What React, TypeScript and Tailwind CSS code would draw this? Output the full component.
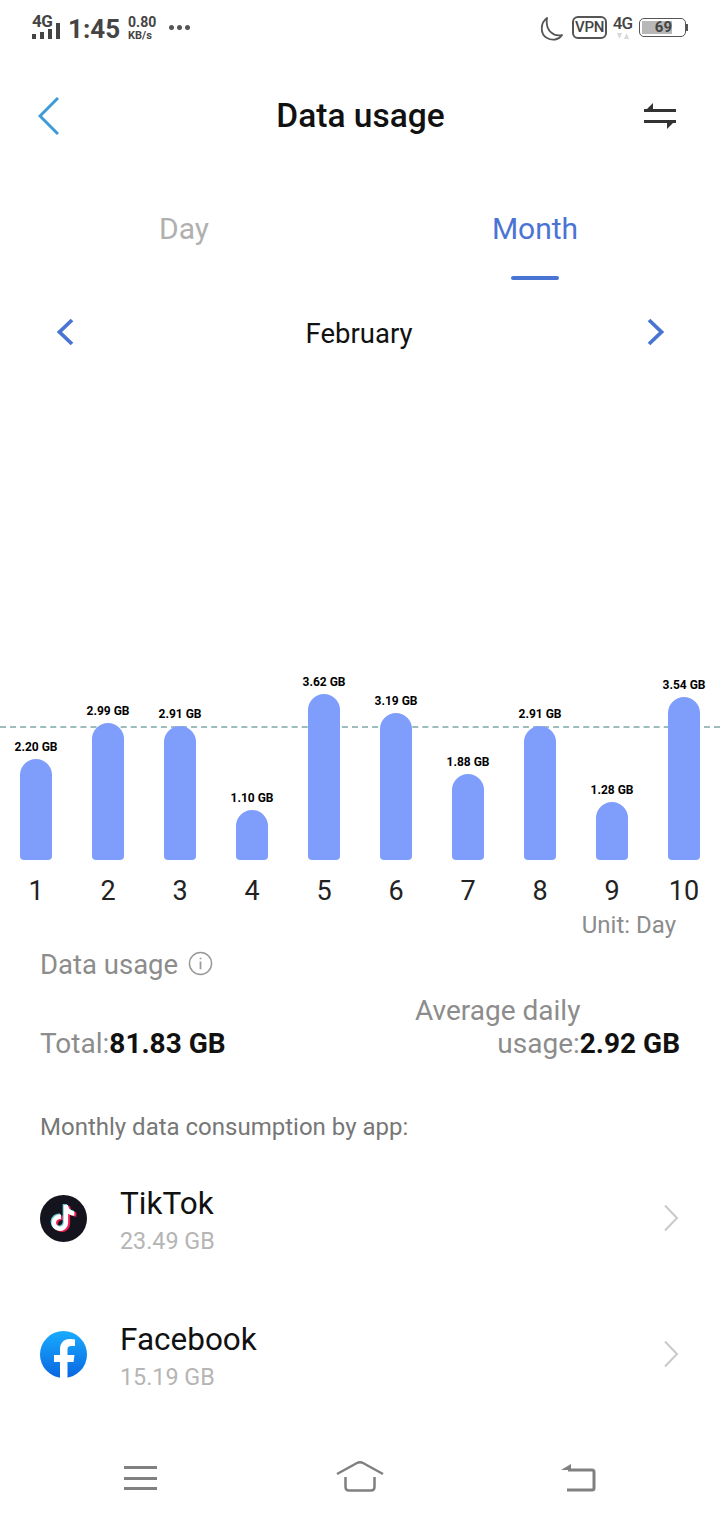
import { FaTiktok } from 'react-icons/fa';

const bars = [
  { day: 1, label: '2.20 GB', height: 101 },
  { day: 2, label: '2.99 GB', height: 137 },
  { day: 3, label: '2.91 GB', height: 134 },
  { day: 4, label: '1.10 GB', height: 50 },
  { day: 5, label: '3.62 GB', height: 166 },
  { day: 6, label: '3.19 GB', height: 147 },
  { day: 7, label: '1.88 GB', height: 86 },
  { day: 8, label: '2.91 GB', height: 134 },
  { day: 9, label: '1.28 GB', height: 58 },
  { day: 10, label: '3.54 GB', height: 163 },
];

function StatusBar() {
  return (
    <div className="h-[56px] flex items-start justify-between pl-[32px] pr-[32px] pt-[12px] text-[#444444]">
      <div className="flex items-start">
        <div className="relative w-[28px] h-[28px]">
          <span className="absolute left-0 top-[1px] text-[17px] leading-[17px] font-bold tracking-[-0.5px]">4G</span>
          <div className="absolute left-0 top-[11px] h-[16px] flex items-end gap-[4px]">
            <div className="w-[4px] h-[5px] bg-[#444444]" />
            <div className="w-[4px] h-[7px] bg-[#444444]" />
            <div className="w-[4px] h-[10px] bg-[#444444]" />
            <div className="w-[4px] h-[16px] bg-[#444444]" />
          </div>
        </div>
        <span className="ml-[8px] mt-[1px] text-[26px] leading-[32px] font-bold">1:45</span>
        <div className="ml-[8px] flex flex-col items-start text-[#444444] font-bold mt-[3px]">
          <span className="text-[14px] leading-[14px]">0.80</span>
          <span className="text-[11px] leading-[13px]">KB/s</span>
        </div>
        <div className="ml-[13px] mt-[13px] flex gap-[3px]">
          <div className="w-[5px] h-[5px] rounded-full bg-[#555555]" />
          <div className="w-[5px] h-[5px] rounded-full bg-[#555555]" />
          <div className="w-[5px] h-[5px] rounded-full bg-[#555555]" />
        </div>
      </div>
      <div className="flex items-start">
        <svg width="24" height="26" viewBox="0 0 24 26" fill="none" className="mt-[4px]">
          <path d="M8 2 C1 7 1 18 8 22 C13 25 20 24 23 19 C15 21 6 15 8 2 Z" stroke="#555555" strokeWidth="1.8" strokeLinejoin="round" />
        </svg>
        <div className="ml-[9px] mt-[4px] w-[35px] h-[23px] rounded-[6px] border-2 border-[#555555] flex items-center justify-center text-[15px] font-medium tracking-[-0.3px]">VPN</div>
        <div className="ml-[6px] w-[19px] flex flex-col items-center">
          <span className="text-[17px] leading-[17px] font-medium tracking-[-0.8px] mt-[3px]">4G</span>
          <svg width="14" height="7" viewBox="0 0 14 7" className="mt-[1px]">
            <path d="M1 0 L6 0 L3.5 6 Z M8 6 L13 6 L10.500 0 Z" fill="#d8d8d8" />
          </svg>
        </div>
        <div className="ml-[7px] mt-[6px] flex items-center">
          <div className="w-[47px] h-[19px] rounded-[5px] border border-[#555555] p-[2px]">
            <div className="w-[30px] h-full bg-[#b8b8b8] flex items-center justify-end text-[15px] font-bold">
              <span>69</span>
            </div>
          </div>
          <div className="w-[2px] h-[7px] bg-[#555555]" />
        </div>
      </div>
    </div>
  );
}

function Chart() {
  return (
    <div className="relative">
      <div className="absolute left-0 right-0 top-[58px] border-t-2 border-dashed border-[#9dbdbd]" />
      <div className="h-[192px] grid grid-cols-10 items-end">
        {bars.map((b) => (
          <div key={b.day} className="flex flex-col items-center">
            <span className="text-[12px] leading-[13px] font-bold text-black mb-[5px] whitespace-nowrap">{b.label}</span>
            <div
              className="relative w-[32px] rounded-t-[16px] rounded-b-[4px] bg-[#7f9efb]"
              style={{ height: b.height }}
            />
          </div>
        ))}
      </div>
      <div className="grid grid-cols-10 mt-[15px]">
        {bars.map((b) => (
          <span key={b.day} className="text-center text-[27px] leading-[32px] text-[#222222]">{b.day}</span>
        ))}
      </div>
    </div>
  );
}

function AppRow({ icon, name, size }: { icon: React.ReactNode; name: string; size: string }) {
  return (
    <div className="h-[136px] pl-[40px] pr-[41px] flex items-center">
      <div className="w-[47px] h-[47px] shrink-0">{icon}</div>
      <div className="ml-[33px] flex-1 pt-[4px]">
        <div className="text-[31.500px] leading-[38px] text-[#111111]">{name}</div>
        <div className="mt-[3px] text-[23.300px] leading-[30px] text-[#b5b5b5]">{size}</div>
      </div>
      <svg width="16" height="28" viewBox="0 0 16 28" fill="none">
        <path d="M2 1.500 L14 14 L2 26.500" stroke="#c9c9c9" strokeWidth="2" />
      </svg>
    </div>
  );
}

function TikTokIcon() {
  return (
    <div className="relative w-full h-full rounded-full bg-[#14141e]">
      <FaTiktok className="absolute left-[11.500px] top-[11.500px] w-[26px] h-[26px] text-[#ee1d52]" />
      <FaTiktok className="absolute left-[8.500px] top-[9px] w-[26px] h-[26px] text-[#69c9d0]" />
      <FaTiktok className="absolute left-[10px] top-[10px] w-[26px] h-[26px] text-white" />
    </div>
  );
}

function FacebookIcon() {
  return (
    <svg viewBox="0 0 47 47" className="w-full h-full">
      <defs>
        <linearGradient id="fb" x1="0" y1="0" x2="0" y2="1">
          <stop offset="0" stopColor="#18acfe" />
          <stop offset="1" stopColor="#0a66e0" />
        </linearGradient>
      </defs>
      <circle cx="23.500" cy="23.500" r="23.500" fill="url(#fb)" />
      <path d="M20 47 L20 31 L14 31 L14 24 L20 24 L20 18 C20 12 24 8 29.500 8 C32 8 35 8.500 35 8.500 L35 15 L31 15 C28.500 15 27.500 16.500 27.500 18.500 L27.500 24 L34.500 24 L33.500 31 L27.500 31 L27.500 47 Z" fill="#ffffff" />
    </svg>
  );
}

export default function App() {
  return (
    <div className="w-[720px] h-[1520px] bg-white overflow-hidden flex flex-col font-['Roboto',sans-serif]">
      <StatusBar />

      {/* header */}
      <div className="h-[120px] pl-[38px] pr-[42px] grid grid-cols-[1fr_auto_1fr] items-center">
        <svg width="21" height="38" viewBox="0 0 21 38" fill="none">
          <path d="M20 1 L2 19 L20 37" stroke="#3d9bd8" strokeWidth="3" />
        </svg>
        <h1 className="text-[33.500px] font-medium text-[#111111] ml-[5px] mt-[1px]">Data usage</h1>
        <svg width="36" height="28" viewBox="0 0 36 28" fill="none" className="justify-self-end">
          <path d="M2 8.500 L34 8.500" stroke="#333333" strokeWidth="3" />
          <path d="M2 10 L11 1 L11 10 Z" fill="#333333" />
          <path d="M2 19.500 L34 19.500" stroke="#333333" strokeWidth="3" />
          <path d="M34 18 L25 27 L25 18 Z" fill="#333333" />
        </svg>
      </div>

      {/* tabs */}
      <div className="h-[122px] grid grid-cols-2 text-[30px]">
        <div className="pt-[30px] text-center text-[#b0b0b0] pl-[8px] leading-[45px]">Day</div>
        <div className="flex flex-col items-center pt-[30px] pr-[10px]">
          <span className="text-[#4a74d4] leading-[45px]">Month</span>
          <div className="mt-[25px] w-[48px] h-[4px] rounded-full bg-[#4a74d4]" />
        </div>
      </div>

      {/* month picker */}
      <div className="h-[115px] pl-[56px] pr-[55px] flex items-start justify-between pt-[13px]">
        <svg width="18" height="28" viewBox="0 0 18 28" fill="none" className="mt-[7px]">
          <path d="M16 2 L3.500 14 L16 26" stroke="#4a74d4" strokeWidth="3.800" />
        </svg>
        <span className="text-[27.500px] leading-[44px] text-[#111111] mt-[1px] mr-[3px]">February</span>
        <svg width="18" height="28" viewBox="0 0 18 28" fill="none" className="mt-[7px]">
          <path d="M2 2 L14.500 14 L2 26" stroke="#4a74d4" strokeWidth="3.800" />
        </svg>
      </div>

      <div className="h-[255px]" />

      <Chart />

      <div className="pr-[44px] text-right text-[24px] leading-[30px] text-[#8c8c8c] mt-[3px]">Unit: Day</div>

      <div className="pl-[40px] mt-[5px] flex items-center text-[#8c8c8c]">
        <span className="text-[27.500px] leading-[40px]">Data usage</span>
        <svg width="25" height="25" viewBox="0 0 26 26" fill="none" className="ml-[10px] -mt-[3px]">
          <circle cx="13" cy="13" r="11.500" stroke="#999999" strokeWidth="1.5" />
          <path d="M13 11 L13 19 M13 7 L13 8.500" stroke="#999999" strokeWidth="1.8" />
        </svg>
      </div>

      <div className="pl-[40px] pr-[40px] flex items-end justify-between mt-[9px]">
        <div className="text-[28px] leading-[33px] text-[#8c8c8c]">
          Total:<span className="font-bold text-[#111111]">81.83 GB</span>
        </div>
        <div className="w-[265px] text-right text-[28px] leading-[33px] text-[#8c8c8c]">
          <div className="text-left">Average daily</div>
          <div>usage:<span className="font-bold text-[#111111]">2.92 GB</span></div>
        </div>
      </div>

      <div className="pl-[40px] mt-[50px] text-[24px] leading-[34px] text-[#777777]">Monthly data consumption by app:</div>

      <div className="mt-[6px]">
        <AppRow icon={<TikTokIcon />} name="TikTok" size="23.49 GB" />
        <AppRow icon={<FacebookIcon />} name="Facebook" size="15.19 GB" />
      </div>

      {/* nav bar */}
      <div className="mt-auto h-[84px] pl-[124px] pr-[126px] flex items-start justify-between pt-[28px]">
        <div className="w-[33px] h-[26px] pt-[2px] flex flex-col justify-between">
          <div className="h-[3px] bg-[#808080]" />
          <div className="h-[3px] bg-[#808080]" />
          <div className="h-[3px] bg-[#808080]" />
        </div>
        <svg width="48" height="32" viewBox="0 0 48 32" fill="none" className="-mt-[3px] ml-[2px]">
          <path d="M1 13 L21 2 Q24 0.500 27 2 L47 13" stroke="#808080" strokeWidth="2.500" />
          <path d="M9.500 16 L9.500 26 Q9.500 29.500 13 29.500 L35 29.500 Q38.500 29.500 38.500 26 L38.500 16" stroke="#808080" strokeWidth="2.500" />
        </svg>
        <svg width="36" height="30" viewBox="0 0 36 30" fill="none" className="-mt-[1px] mr-[-2px]">
          <path d="M1 7 L11 1 L11 7 Z" fill="#808080" />
          <path d="M8 7 L32 7 Q34 7 34 9 L34 25 Q34 27 32 27 L7 27" stroke="#808080" strokeWidth="3" />
        </svg>
      </div>
    </div>
  );
}
